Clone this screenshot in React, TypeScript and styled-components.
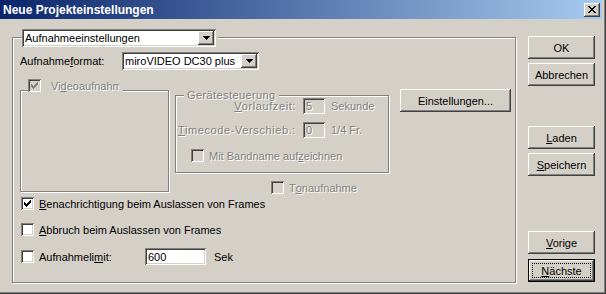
import React from "react";
import styled, { createGlobalStyle, css } from "styled-components";

const face = "#d4d0c8";

const GlobalStyle = createGlobalStyle`
  html, body { margin: 0; padding: 0; background: ${face}; }
  body {
    font-family: "Liberation Sans", Arial, sans-serif;
    font-size: 11px;
    color: #000;
  }
`;

const raised = css`
  box-shadow: inset -1px -1px #404040, inset 1px 1px #fff,
    inset -2px -2px #808080, inset 2px 2px ${face};
`;

const sunken = css`
  box-shadow: inset 1px 1px #808080, inset -1px -1px #fff,
    inset 2px 2px #404040, inset -2px -2px ${face};
`;

const disabledText = css`
  color: #808080;
  text-shadow: 1px 1px #fff;
`;

const Window = styled.div`
  box-sizing: border-box;
  width: 606px;
  height: 294px;
  display: flex;
  flex-direction: column;
  background: ${face};
  box-shadow: inset -1px -1px #404040, inset -2px -2px #808080;
  overflow: hidden;
`;

const TitleBar = styled.div`
  flex: none;
  height: 19px;
  margin-right: 4px;
  padding: 0 2px 0 3px;
  display: flex;
  align-items: center;
  justify-content: space-between;
  background: linear-gradient(to right, #0a246a, #a6caf0);
  color: #fff;
  font-weight: bold;
  font-size: 12px;
`;

const CloseButton = styled.span`
  width: 16px;
  height: 14px;
  display: flex;
  align-items: center;
  justify-content: center;
  background: ${face};
  ${raised};
`;

const Body = styled.div`
  flex: 1;
  display: flex;
  align-items: flex-start;
  padding: 17px 0 0 12px;
`;

const GroupBox = styled.div<{ $w: number; $h: number; $mt?: number; $ml?: number }>`
  box-sizing: border-box;
  flex: none;
  width: ${(p) => p.$w}px;
  height: ${(p) => p.$h}px;
  margin-top: ${(p) => p.$mt ?? 0}px;
  margin-left: ${(p) => p.$ml ?? 0}px;
  border: 1px solid #808080;
  box-shadow: inset 1px 1px #fff, 1px 1px #fff;
  display: flex;
  flex-direction: column;
  align-items: flex-start;
`;

const Caption = styled.div<{ $mt: number; $ml: number; $disabled?: boolean }>`
  display: flex;
  align-items: center;
  gap: 5px;
  margin-top: ${(p) => p.$mt}px;
  margin-left: ${(p) => p.$ml}px;
  padding: 0 2px 0 0;
  background: ${face};
  line-height: 12px;
  white-space: nowrap;
  ${(p) => p.$disabled && disabledText};
`;

const CheckCaption = styled(Caption)`
  padding-right: 4px;
`;

const TextCaption = styled(Caption)`
  padding: 0 3px;
  line-height: 10px;
  letter-spacing: 0.4px;
`;

const ClipText = styled.span<{ $w: number }>`
  display: block;
  width: ${(p) => p.$w}px;
  overflow: hidden;
`;

const MainContent = styled.div`
  padding-left: 7px;
  display: flex;
  flex-direction: column;
  align-self: stretch;
`;

const FormatRow = styled.div`
  margin-top: 5px;
  display: flex;
  align-items: center;
`;

const FormatLabel = styled.span`
  width: 102px;
`;

const Combo = styled.div<{ $w: number }>`
  box-sizing: border-box;
  width: ${(p) => p.$w}px;
  height: 18px;
  padding: 2px;
  display: flex;
  align-items: center;
  background: #fff;
  ${sunken};
`;

const ComboText = styled.span`
  flex: 1;
  padding-left: 1px;
  white-space: nowrap;
  overflow: hidden;
`;

const ComboButton = styled.span`
  flex: none;
  width: 16px;
  height: 14px;
  display: flex;
  align-items: center;
  justify-content: center;
  background: ${face};
  ${raised};
`;

const Section = styled.div`
  height: 103px;
  margin-top: 19px;
  display: flex;
  align-items: flex-start;
`;

const MiddleColumn = styled.div`
  display: flex;
  flex-direction: column;
  margin-left: 6px;
`;

const DeviceGrid = styled.div`
  margin-top: -2px;
  display: grid;
  grid-template-columns: 120px 22px auto;
  grid-auto-rows: 16px;
  column-gap: 7px;
  row-gap: 8px;
  align-items: center;
  line-height: 11px;
  ${disabledText};
`;

const RightLabel = styled.span`
  text-align: right;
  white-space: nowrap;
  letter-spacing: 0.6px;
`;

const Unit = styled.span`
  margin-left: -1px;
  white-space: nowrap;
`;

const Field = styled.span<{ $w: number; $h: number; $disabled?: boolean }>`
  box-sizing: border-box;
  width: ${(p) => p.$w}px;
  height: ${(p) => p.$h}px;
  padding: 0 3px;
  display: flex;
  align-items: center;
  background: ${(p) => (p.$disabled ? face : "#fff")};
  ${sunken};
`;

const CheckRow = styled.div<{ $mt: number; $ml?: number; $disabled?: boolean }>`
  display: flex;
  align-items: center;
  height: 17px;
  margin-top: ${(p) => p.$mt}px;
  padding-left: ${(p) => p.$ml ?? 1}px;
  white-space: nowrap;
  ${(p) => p.$disabled && disabledText};
`;

const Box = styled.span<{ $disabled?: boolean }>`
  flex: none;
  width: 13px;
  height: 13px;
  margin-right: 5px;
  display: block;
  background: ${(p) => (p.$disabled ? face : "#fff")};
  ${sunken};
  text-shadow: none;
`;

const LimitLabel = styled.span`
  width: 106px;
`;

const SekLabel = styled.span`
  margin-left: 8px;
`;

const Button = styled.div<{ $w?: number; $mt?: number; $default?: boolean }>`
  box-sizing: border-box;
  position: relative;
  width: ${(p) => p.$w ?? 67}px;
  height: 23px;
  margin-top: ${(p) => p.$mt ?? 0}px;
  flex: none;
  display: flex;
  align-items: center;
  justify-content: center;
  background: ${face};
  ${raised};
  ${(p) =>
    p.$default &&
    css`
      box-shadow: inset 0 0 0 1px #000, inset -2px -2px #404040,
        inset 2px 2px #fff, inset -3px -3px #808080;
      &::after {
        content: "";
        position: absolute;
        inset: 4px;
        border: 1px dotted #000;
      }
    `};
`;

const ButtonColumn = styled.div`
  margin-left: 12px;
  display: flex;
  flex-direction: column;
`;

const SettingsButton = styled(Button)`
  margin-left: 11px;
`;

function Check({ checked, disabled }: { checked?: boolean; disabled?: boolean }) {
  return (
    <Box $disabled={disabled}>
      {checked && (
        <svg width="13" height="13" viewBox="0 0 13 13" shapeRendering="crispEdges">
          <path
            d="M3 5H4V6H5V7H6V6H7V5H8V4H9V3H10V6H9V7H8V8H7V9H6V10H5V9H4V8H3Z"
            fill={disabled ? "#808080" : "#000"}
          />
        </svg>
      )}
    </Box>
  );
}

function Arrow() {
  return (
    <svg width="7" height="4" viewBox="0 0 7 4" shapeRendering="crispEdges">
      <path d="M0 0H7V1H6V2H5V3H4V4H3V3H2V2H1V1H0Z" fill="#000" />
    </svg>
  );
}

function CloseGlyph() {
  const rows = ["XX....XX", ".XX..XX.", "..XXXX..", "...XX...", "..XXXX..", ".XX..XX.", "XX....XX"];
  return (
    <svg width="8" height="7" viewBox="0 0 8 7" shapeRendering="crispEdges">
      {rows.map((r, y) =>
        r.split("").map((c, x) => (c === "X" ? <rect key={`${x}-${y}`} x={x} y={y} width="1" height="1" fill="#000" /> : null))
      )}
    </svg>
  );
}

export default function App() {
  return (
    <>
      <GlobalStyle />
      <Window>
        <TitleBar>
          <span>Neue Projekteinstellungen</span>
          <CloseButton>
            <CloseGlyph />
          </CloseButton>
        </TitleBar>
        <Body>
          <GroupBox $w={504} $h={246} $mt={1}>
            <Caption $mt={-9} $ml={9}>
              <Combo $w={194}>
                <ComboText>Aufnahmeeinstellungen</ComboText>
                <ComboButton>
                  <Arrow />
                </ComboButton>
              </Combo>
            </Caption>
            <MainContent>
              <FormatRow>
                <FormatLabel>
                  Aufnahme<u>f</u>ormat:
                </FormatLabel>
                <Combo $w={137}>
                  <ComboText>miroVIDEO DC30 plus</ComboText>
                  <ComboButton>
                    <Arrow />
                  </ComboButton>
                </Combo>
              </FormatRow>

              <Section>
                <GroupBox $w={149} $h={102} $mt={1}>
                  <CheckCaption $mt={-12} $ml={7} $disabled>
                    <Check checked disabled />
                    <ClipText $w={68}>
                      Vi<u>d</u>eoaufnahme
                    </ClipText>
                  </CheckCaption>
                </GroupBox>

                <MiddleColumn>
                  <GroupBox $w={214} $h={78} $mt={6}>
                    <TextCaption $mt={-6} $ml={8} $disabled>
                      Gerätesteuerung
                    </TextCaption>
                    <DeviceGrid>
                      <RightLabel>
                        <u>V</u>orlaufzeit:
                      </RightLabel>
                      <Field $w={22} $h={16} $disabled>
                        5
                      </Field>
                      <Unit>Sekunde</Unit>
                      <RightLabel>
                        <u>T</u>imecode-Verschieb.:
                      </RightLabel>
                      <Field $w={22} $h={16} $disabled>
                        0
                      </Field>
                      <Unit>1/4 Fr.</Unit>
                    </DeviceGrid>
                    <CheckRow $mt={9} $ml={15} $disabled>
                      <Check disabled />
                      Mit Bandname auf<u>z</u>eichnen
                    </CheckRow>
                  </GroupBox>
                  <CheckRow $mt={6} $ml={96} $disabled>
                    <Check disabled />
                    T<u>o</u>naufnahme
                  </CheckRow>
                </MiddleColumn>

                <SettingsButton $w={111}>Einstellungen...</SettingsButton>
              </Section>

              <CheckRow $mt={3}>
                <Check checked />
                <span>
                  <u>B</u>enachrichtigung beim Auslassen von Frames
                </span>
              </CheckRow>
              <CheckRow $mt={9}>
                <Check />
                <span>
                  <u>A</u>bbruch beim Auslassen von Frames
                </span>
              </CheckRow>
              <CheckRow $mt={10}>
                <Check />
                <LimitLabel>
                  Aufnahmeli<u>m</u>it:
                </LimitLabel>
                <Field $w={61} $h={17}>
                  600
                </Field>
                <SekLabel>Sek</SekLabel>
              </CheckRow>
            </MainContent>
          </GroupBox>

          <ButtonColumn>
            <Button>OK</Button>
            <Button $mt={4}>Abbrechen</Button>
            <Button $mt={40}>
              <span>
                <u>L</u>aden
              </span>
            </Button>
            <Button $mt={4}>
              <span>
                <u>S</u>peichern
              </span>
            </Button>
            <Button $mt={55}>
              <span>
                <u>V</u>orige
              </span>
            </Button>
            <Button $mt={5} $default>
              <span>
                <u>N</u>ächste
              </span>
            </Button>
          </ButtonColumn>
        </Body>
      </Window>
    </>
  );
}
